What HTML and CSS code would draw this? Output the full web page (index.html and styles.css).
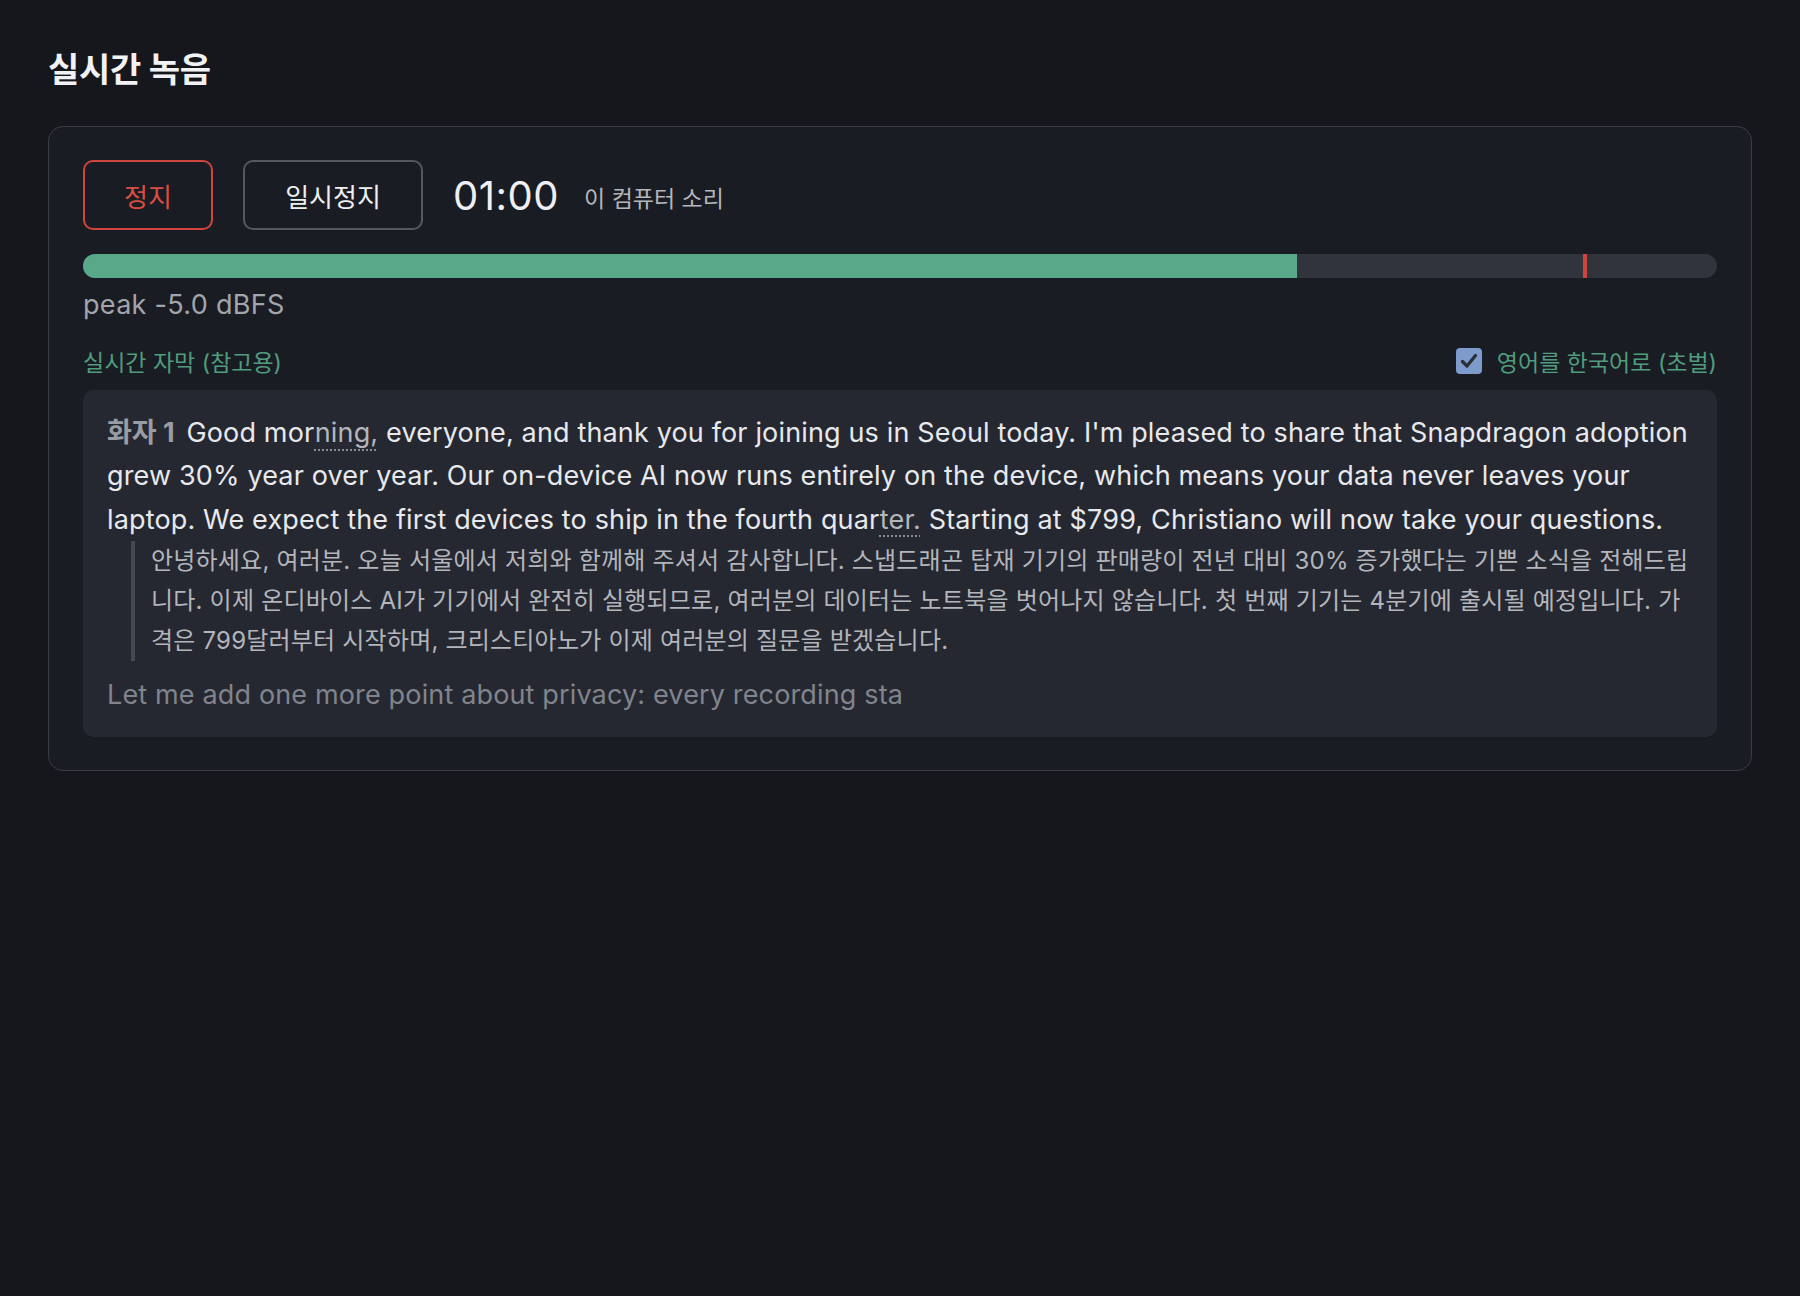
FILE: index.html
```html
<!DOCTYPE html>
<html lang="ko">
<head>
  <meta charset="UTF-8">
  <meta name="viewport" content="width=device-width, initial-scale=1">
  <title>실시간 녹음</title>
  <link rel="stylesheet" href="styles.css">
</head>
<body>
  <h1 class="page-title">실시간 녹음</h1>

  <section class="card">
    <div class="controls">
      <button class="btn btn-stop">정지</button>
      <button class="btn btn-pause">일시정지</button>
      <span class="timer">01:00</span>
      <span class="source">이 컴퓨터 소리</span>
    </div>

    <div class="meter">
      <div class="meter-fill" style="width: 74.3%"></div>
      <div class="meter-peak" style="left: 91.8%"></div>
    </div>
    <div class="peak-label">peak -5.0 dBFS</div>

    <div class="caption-head">
      <span class="caption-title">실시간 자막 (참고용)</span>
      <label class="translate-toggle">
        <span class="check">
          <svg viewBox="0 0 26 26" width="26" height="26">
            <rect x="0" y="0" width="26" height="26" rx="4" fill="#7d9bcb"/>
            <path d="M6.5 13.5 L11 18 L19.5 7.5" fill="none" stroke="#2b2e36" stroke-width="3.2" stroke-linecap="round" stroke-linejoin="round"/>
          </svg>
        </span>
        영어를 한국어로 (초벌)
      </label>
    </div>

    <div class="transcript">
      <p class="segment"><span class="speaker">화자 1</span> Good mor<span class="unstable">ning,</span> everyone, and thank you for joining us in Seoul today. I'm pleased to share that Snapdragon adoption grew 30% year over year. Our on-device AI now runs entirely on the device, which means your data never leaves your laptop. We expect the first devices to ship in the fourth quar<span class="unstable">ter.</span> Starting at $799, Christiano will now take your questions.</p>
      <blockquote class="translation">안녕하세요, 여러분. 오늘 서울에서 저희와 함께해 주셔서 감사합니다. 스냅드래곤 탑재 기기의 판매량이 전년 대비 30% 증가했다는 기쁜 소식을 전해드립니다. 이제 온디바이스 AI가 기기에서 완전히 실행되므로, 여러분의 데이터는 노트북을 벗어나지 않습니다. 첫 번째 기기는 4분기에 출시될 예정입니다. 가격은 799달러부터 시작하며, 크리스티아노가 이제 여러분의 질문을 받겠습니다.</blockquote>
      <p class="interim">Let me add one more point about privacy: every recording sta</p>
    </div>
  </section>
</body>
</html>
```

FILE: styles.css
```css
* { box-sizing: border-box; }

body {
  margin: 0;
  padding: 43px 48px 40px;
  background: #16171c;
  color: #e8e9ec;
  font-family: Inter, "Noto Sans CJK KR", sans-serif;
  min-height: 100vh;
}

.page-title {
  margin: 0 0 29px;
  font-size: 34px;
  font-weight: 700;
  line-height: 54px;
  color: #f2f2f4;
  letter-spacing: -0.3px;
}

.card {
  background: #1a1c23;
  border: 1.5px solid #3b3d45;
  border-radius: 15px;
  padding: 33px 34px;
}

.controls {
  display: flex;
  align-items: center;
  gap: 30px;
}

.btn {
  height: 70px;
  background: transparent;
  border-radius: 10px;
  font-family: inherit;
  font-size: 26px;
  padding: 0 30px;
  cursor: pointer;
}

.btn-stop {
  width: 130px;
  border: 2px solid #d0463c;
  color: #dc4c40;
}

.btn-pause {
  width: 180px;
  border: 2px solid #55585f;
  color: #eeeff1;
}

.timer {
  font-size: 40px;
  color: #eeeff2;
  letter-spacing: 0.5px;
}

.source {
  margin: 4px 0 0 -5px;
  font-size: 23px;
  color: #b4b6bc;
}

.meter {
  position: relative;
  height: 24px;
  margin-top: 24px;
  background: #31343d;
  border-radius: 12px;
  overflow: hidden;
}

.meter-fill {
  height: 100%;
  background: #58a889;
}

.meter-peak {
  position: absolute;
  top: 0;
  width: 4px;
  height: 100%;
  background: #d0453b;
}

.peak-label {
  margin-top: 9px;
  font-size: 27px;
  line-height: 36px;
  letter-spacing: 0.3px;
  color: #a2a5ac;
}

.caption-head {
  display: flex;
  justify-content: space-between;
  align-items: center;
  margin-top: 21px;
  height: 34px;
  font-size: 23px;
  color: #4f9d7c;
}

.translate-toggle {
  display: flex;
  align-items: center;
  gap: 15px;
  cursor: pointer;
}

.check {
  display: flex;
}

.transcript {
  margin-top: 12px;
  background: #252831;
  border-radius: 10px;
  padding: 21px 24px 21px;
}

.segment {
  margin: 0;
  font-size: 27px;
  line-height: 43.3px;
  letter-spacing: 0.15px;
  color: #e8e9ec;
}

.speaker {
  font-weight: 700;
  color: #9a9ca3;
  margin-right: 4px;
  letter-spacing: 0;
}

.unstable {
  color: #b4b6bc;
  text-decoration: underline dotted #8a8c93;
  text-decoration-thickness: 2px;
  text-underline-offset: 7px;
}

.translation {
  margin: 0 0 12px 24px;
  padding-left: 16px;
  border-left: 4px solid #454850;
  font-size: 24px;
  line-height: 40px;
  letter-spacing: 0.2px;
  color: #b3b5bb;
}

.interim {
  margin: 0;
  font-size: 27px;
  line-height: 43.3px;
  letter-spacing: 0.15px;
  color: #81848c;
}
```
